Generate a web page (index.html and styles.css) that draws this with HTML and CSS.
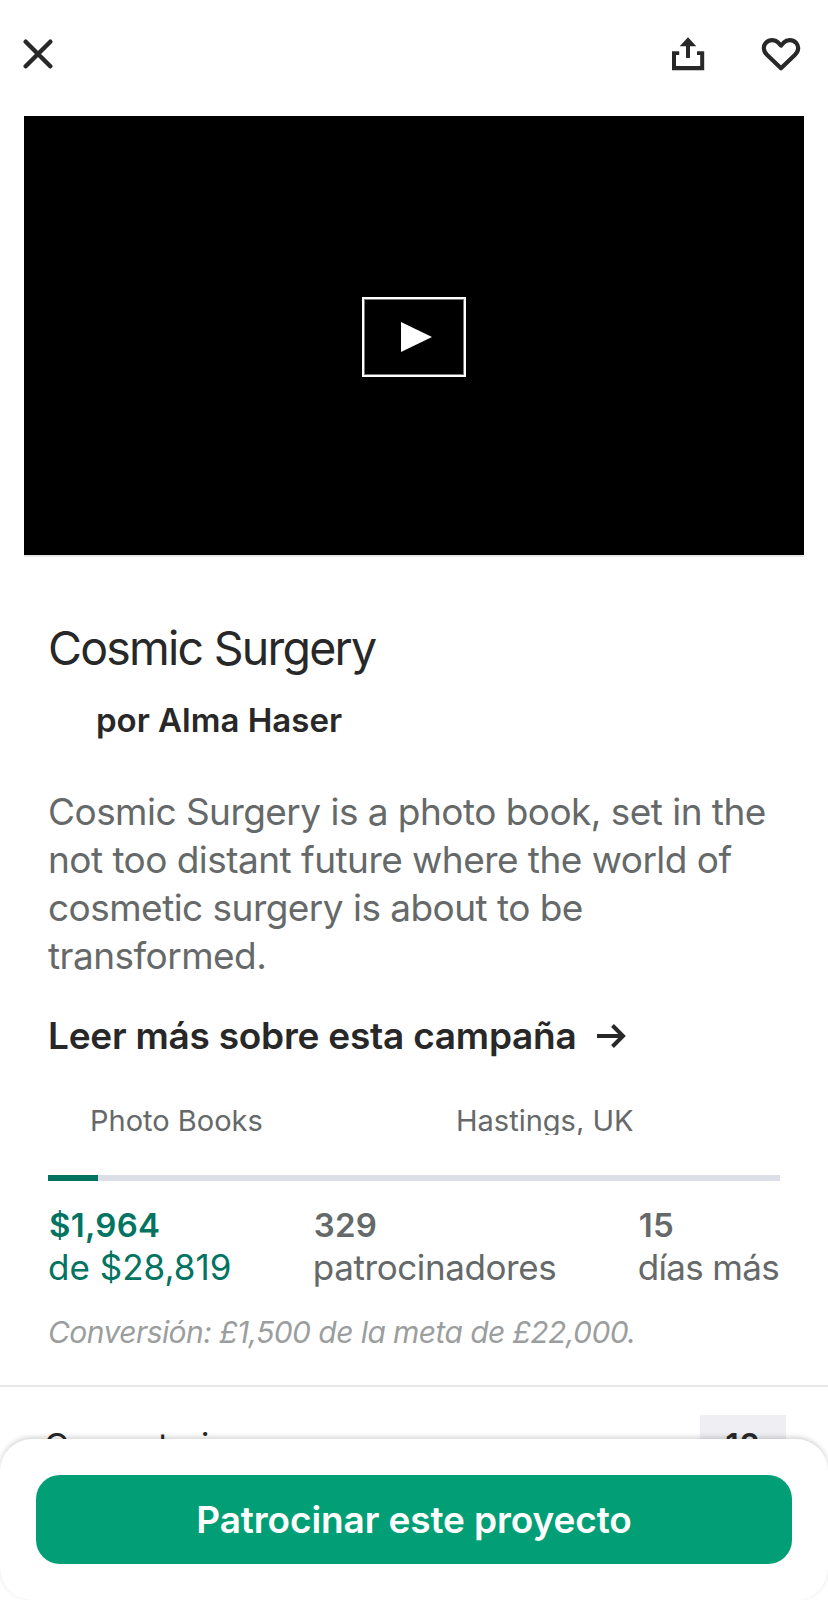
FILE: index.html
```html
<!DOCTYPE html>
<html lang="es">
<head>
<meta charset="utf-8">
<title>Cosmic Surgery</title>
<link rel="stylesheet" href="styles.css">
</head>
<body>
<div class="screen">
  <header class="topbar">
    <svg class="icon icon-close" viewBox="0 0 30 30" aria-label="Cerrar"><path d="M2.7 2.7 27.3 27.3M27.3 2.7 2.7 27.3"/></svg>
    <div class="actions">
      <svg class="icon-share" viewBox="0 0 34 34" aria-label="Compartir"><path d="M17 0.2 25.3 9.2H19V21H15V9.2H8.7Z"/><path d="M1 14.2H8.2V18H5V29H29.2V18H26V14.2H33.2V33.2H1Z"/></svg>
      <svg class="icon icon-heart" viewBox="0 0 40 34" aria-label="Guardar"><path d="M20 31.2 6.2 18C1.8 13.8 2 8.8 5 5.7 8.6 2.1 14 2.4 17.2 5.6L20 8.6 22.8 5.6C26 2.4 31.4 2.1 35 5.7 38 8.8 38.2 13.8 33.8 18Z"/></svg>
    </div>
  </header>

  <section class="video">
    <button class="play" aria-label="Reproducir"><svg class="play-icon" viewBox="0 0 31 30"><path d="M0 0 31 15 0 30Z"/></svg></button>
  </section>

  <main class="project">
    <h1 class="title">Cosmic Surgery</h1>
    <p class="creator">por Alma Haser</p>
    <p class="blurb">Cosmic Surgery is a photo book, set in the not too distant future where the world of cosmetic surgery is about to be transformed.</p>
    <a class="more">Leer más sobre esta campaña<svg class="icon arrow" viewBox="0 0 30 26"><path d="M0 13H26M15.5 2.5 26 13 15.5 23.5"/></svg></a>
    <div class="meta">
      <span class="meta-item">Photo Books</span>
      <span class="meta-item">Hastings, UK</span>
    </div>
    <div class="progress"><div class="progress-fill"></div></div>
    <div class="stats">
      <div class="stat stat-pledged"><b class="stat-value">$1,964</b><span class="stat-label goal">de $28,819</span></div>
      <div class="stat"><b class="stat-value">329</b><span class="stat-label">patrocinadores</span></div>
      <div class="stat"><b class="stat-value">15</b><span class="stat-label days">días más</span></div>
    </div>
    <p class="conversion">Conversión: £1,500 de la meta de £22,000.</p>
  </main>

  <div class="comments">
    <span class="comments-label">Comentarios</span>
    <span class="badge">12</span>
  </div>

  <div class="sheet"><button class="pledge">Patrocinar este proyecto</button></div>
</div>
</body>
</html>
```
FILE: styles.css
```css
* { box-sizing: border-box; margin: 0; padding: 0; }
body { background: #fff; font-family: Inter, "Liberation Sans", sans-serif; color: #282828; }
button { font: inherit; border: 0; background: none; }
.screen { position: relative; width: 828px; height: 1600px; overflow: hidden; }

.icon { fill: none; stroke: #282828; }
.topbar { display: flex; justify-content: space-between; align-items: center; height: 116px; padding: 0 27px 8px 23px; }
.icon-close { width: 30px; height: 30px; stroke-width: 4.4; stroke-linecap: round; }
.actions { display: flex; align-items: center; gap: 56px; }
.icon-share { width: 34px; height: 34px; fill: #282828; }
.icon-heart { width: 40px; height: 34px; stroke-width: 4.2; stroke-linejoin: round; }

.video { display: flex; align-items: center; justify-content: center; height: 441px; margin: 0 24px; background: #000; border-bottom: 2px solid #e8e6e8; }
.play { display: flex; align-items: center; justify-content: center; width: 104px; height: 80px; margin-top: 3px; padding-left: 4px; border: 2px solid #fff; box-shadow: inset 0 0 0 1px #777; }
.play-icon { width: 31px; height: 30px; fill: #fff; }

.project { padding: 63px 48px 35px; border-bottom: 2px solid #e8e8e8; }
.title { font-size: 46.5px; line-height: 56px; font-weight: 400; letter-spacing: -1.76px; }
.creator { margin-top: 24px; padding-left: 48px; font-size: 33px; line-height: 40px; font-weight: 600; }
.blurb { margin-top: 48px; font-size: 37px; line-height: 48px; letter-spacing: -0.54px; color: #656969; }
.more { display: flex; align-items: center; gap: 20px; margin-top: 32px; font-size: 37px; line-height: 48px; font-weight: 600; letter-spacing: -0.24px; }
.arrow { width: 30px; height: 26px; stroke-width: 4; }
.meta { display: grid; grid-template-columns: 366px 366px; margin-top: 43px; }
.meta-item { height: 32px; padding-left: 42px; overflow: hidden; font-size: 29px; line-height: 36px; color: #656969; }
.progress { height: 6px; margin-top: 40px; background: #dcdee8; }
.progress-fill { width: 50px; height: 6px; background: #037362; }

.stats { display: flex; justify-content: space-between; margin-top: 24px; padding-right: 1px; color: #656969; }
.stat { display: flex; flex-direction: column; }
.stat-pledged { color: #037362; }
.stat-value { padding-left: 1px; font-size: 33px; line-height: 40px; font-weight: 600; letter-spacing: 0.25px; }
.stat-label { font-size: 35px; line-height: 44px; letter-spacing: -0.4px; }
.goal { letter-spacing: 0.02px; }
.days { letter-spacing: -0.67px; }
.conversion { margin-top: 25px; font-size: 30px; line-height: 36px; font-style: italic; letter-spacing: -0.57px; color: #9b9e9e; white-space: nowrap; }

.comments { display: flex; justify-content: space-between; padding: 28px 42px 0 44px; line-height: 62px; }
.comments-label { font-size: 34px; letter-spacing: -0.2px; }
.badge { width: 86px; height: 62px; background: #eeeef3; text-align: center; font-size: 32px; font-weight: 600; letter-spacing: 1px; }

/* Bottom sheet that floats over the scrolled content */
.sheet { position: absolute; left: 0; right: 0; bottom: 0; height: 161px; padding: 36px; border-radius: 32px; background: #fff; box-shadow: 0 -2px 5px rgba(0, 0, 0, 0.17); }
.pledge { display: block; width: 756px; height: 89px; border-radius: 24px; background: #029f76; color: #fff; font-size: 37px; line-height: 89px; font-weight: 600; letter-spacing: -0.11px; }
```
